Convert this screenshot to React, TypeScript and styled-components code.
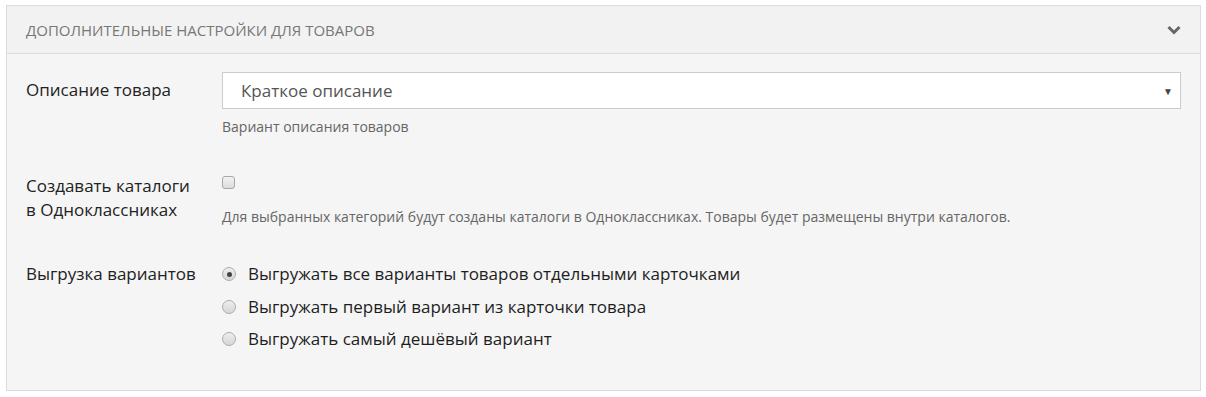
import React, { useState } from "react";
import styled, { createGlobalStyle } from "styled-components";

const GlobalStyle = createGlobalStyle`
  body {
    margin: 0;
    padding: 5px 5px 0 6px;
    background: #fff;
    font-family: "Open Sans", "Liberation Sans", sans-serif;
  }
  * { box-sizing: border-box; }
`;

const Panel = styled.div`
  border: 1px solid #dcdcdc;
  background: #f5f5f5;
`;

const Header = styled.div`
  display: flex;
  align-items: center;
  justify-content: space-between;
  height: 48px;
  padding: 0 19px 0 19px;
  background: #f2f2f2;
  border-bottom: 1px solid #dcdcdc;
`;

const HeaderTitle = styled.div`
  font-size: 15px;
  color: #777;
  text-transform: uppercase;
`;

const Body = styled.div`
  padding: 18px 19px 39px 19px;
  display: flex;
  flex-direction: column;
`;

const Row = styled.div<{ $mt?: number }>`
  display: grid;
  grid-template-columns: 196px 1fr;
  align-items: start;
  margin-top: ${(p) => p.$mt ?? 0}px;
`;

const Label = styled.div<{ $top?: number }>`
  font-size: 17px;
  line-height: 24px;
  color: #222;
  padding-top: ${(p) => p.$top ?? 0}px;
`;

const Field = styled.div`
  display: flex;
  flex-direction: column;
`;

const SelectBox = styled.div`
  position: relative;
  height: 37px;
  background: #fff;
  border: 1px solid #ccc;
  display: flex;
  align-items: center;
  padding-left: 18px;
  font-size: 17px;
  color: #555;
`;

const Caret = styled.span`
  position: absolute;
  right: 7px;
  top: 50%;
  transform: translateY(-50%);
  font-size: 10px;
  color: #444;
`;

const Help = styled.div<{ $mt: number }>`
  margin-top: ${(p) => p.$mt}px;
  font-size: 14px;
  line-height: 19px;
  color: #666;
`;

const Check = styled.span`
  display: block;
  width: 13px;
  height: 13px;
  margin-top: 2px;
  border: 1px solid #a8a8a8;
  border-radius: 3px;
  background: linear-gradient(#f2f2f2, #dcdcdc);
`;

const RadioList = styled.div`
  display: flex;
  flex-direction: column;
  gap: 8.5px;
`;

const RadioRow = styled.label`
  display: flex;
  align-items: center;
  gap: 12px;
  font-size: 17px;
  line-height: 24px;
  color: #1e1e1e;
  cursor: pointer;
`;

const RadioDot = styled.span<{ $on: boolean }>`
  position: relative;
  width: 14px;
  height: 14px;
  border-radius: 50%;
  border: 1px solid #acacac;
  background: linear-gradient(#eeeeee, #d6d6d6);
  &::after {
    content: "";
    display: ${(p) => (p.$on ? "block" : "none")};
    position: absolute;
    left: 3.5px;
    top: 3.5px;
    width: 5px;
    height: 5px;
    border-radius: 50%;
    background: #444;
  }
`;

const Chevron = () => (
  <svg width="14" height="10" viewBox="0 0 14 10">
    <path d="M1.5 2 L7 7.5 L12.5 2" fill="none" stroke="#666" strokeWidth="3" />
  </svg>
);

const variants = [
  "Выгружать все варианты товаров отдельными карточками",
  "Выгружать первый вариант из карточки товара",
  "Выгружать самый дешёвый вариант",
];

export default function App() {
  const [sel, setSel] = useState(0);
  return (
    <>
      <GlobalStyle />
      <Panel>
        <Header>
          <HeaderTitle>Дополнительные настройки для товаров</HeaderTitle>
          <Chevron />
        </Header>
        <Body>
          <Row>
            <Label $top={6}>Описание товара</Label>
            <Field>
              <SelectBox>
                Краткое описание
                <Caret>▼</Caret>
              </SelectBox>
              <Help $mt={8}>Вариант описания товаров</Help>
            </Field>
          </Row>
          <Row $mt={38}>
            <Label>
              Создавать каталоги
              <br />в Одноклассниках
            </Label>
            <Field>
              <Check />
              <Help $mt={18}>
                Для выбранных категорий будут созданы каталоги в Одноклассниках. Товары будет размещены внутри каталогов.
              </Help>
            </Field>
          </Row>
          <Row $mt={36}>
            <Label>Выгрузка вариантов</Label>
            <RadioList>
              {variants.map((v, i) => (
                <RadioRow key={v} onClick={() => setSel(i)}>
                  <RadioDot $on={sel === i} />
                  {v}
                </RadioRow>
              ))}
            </RadioList>
          </Row>
        </Body>
      </Panel>
    </>
  );
}
